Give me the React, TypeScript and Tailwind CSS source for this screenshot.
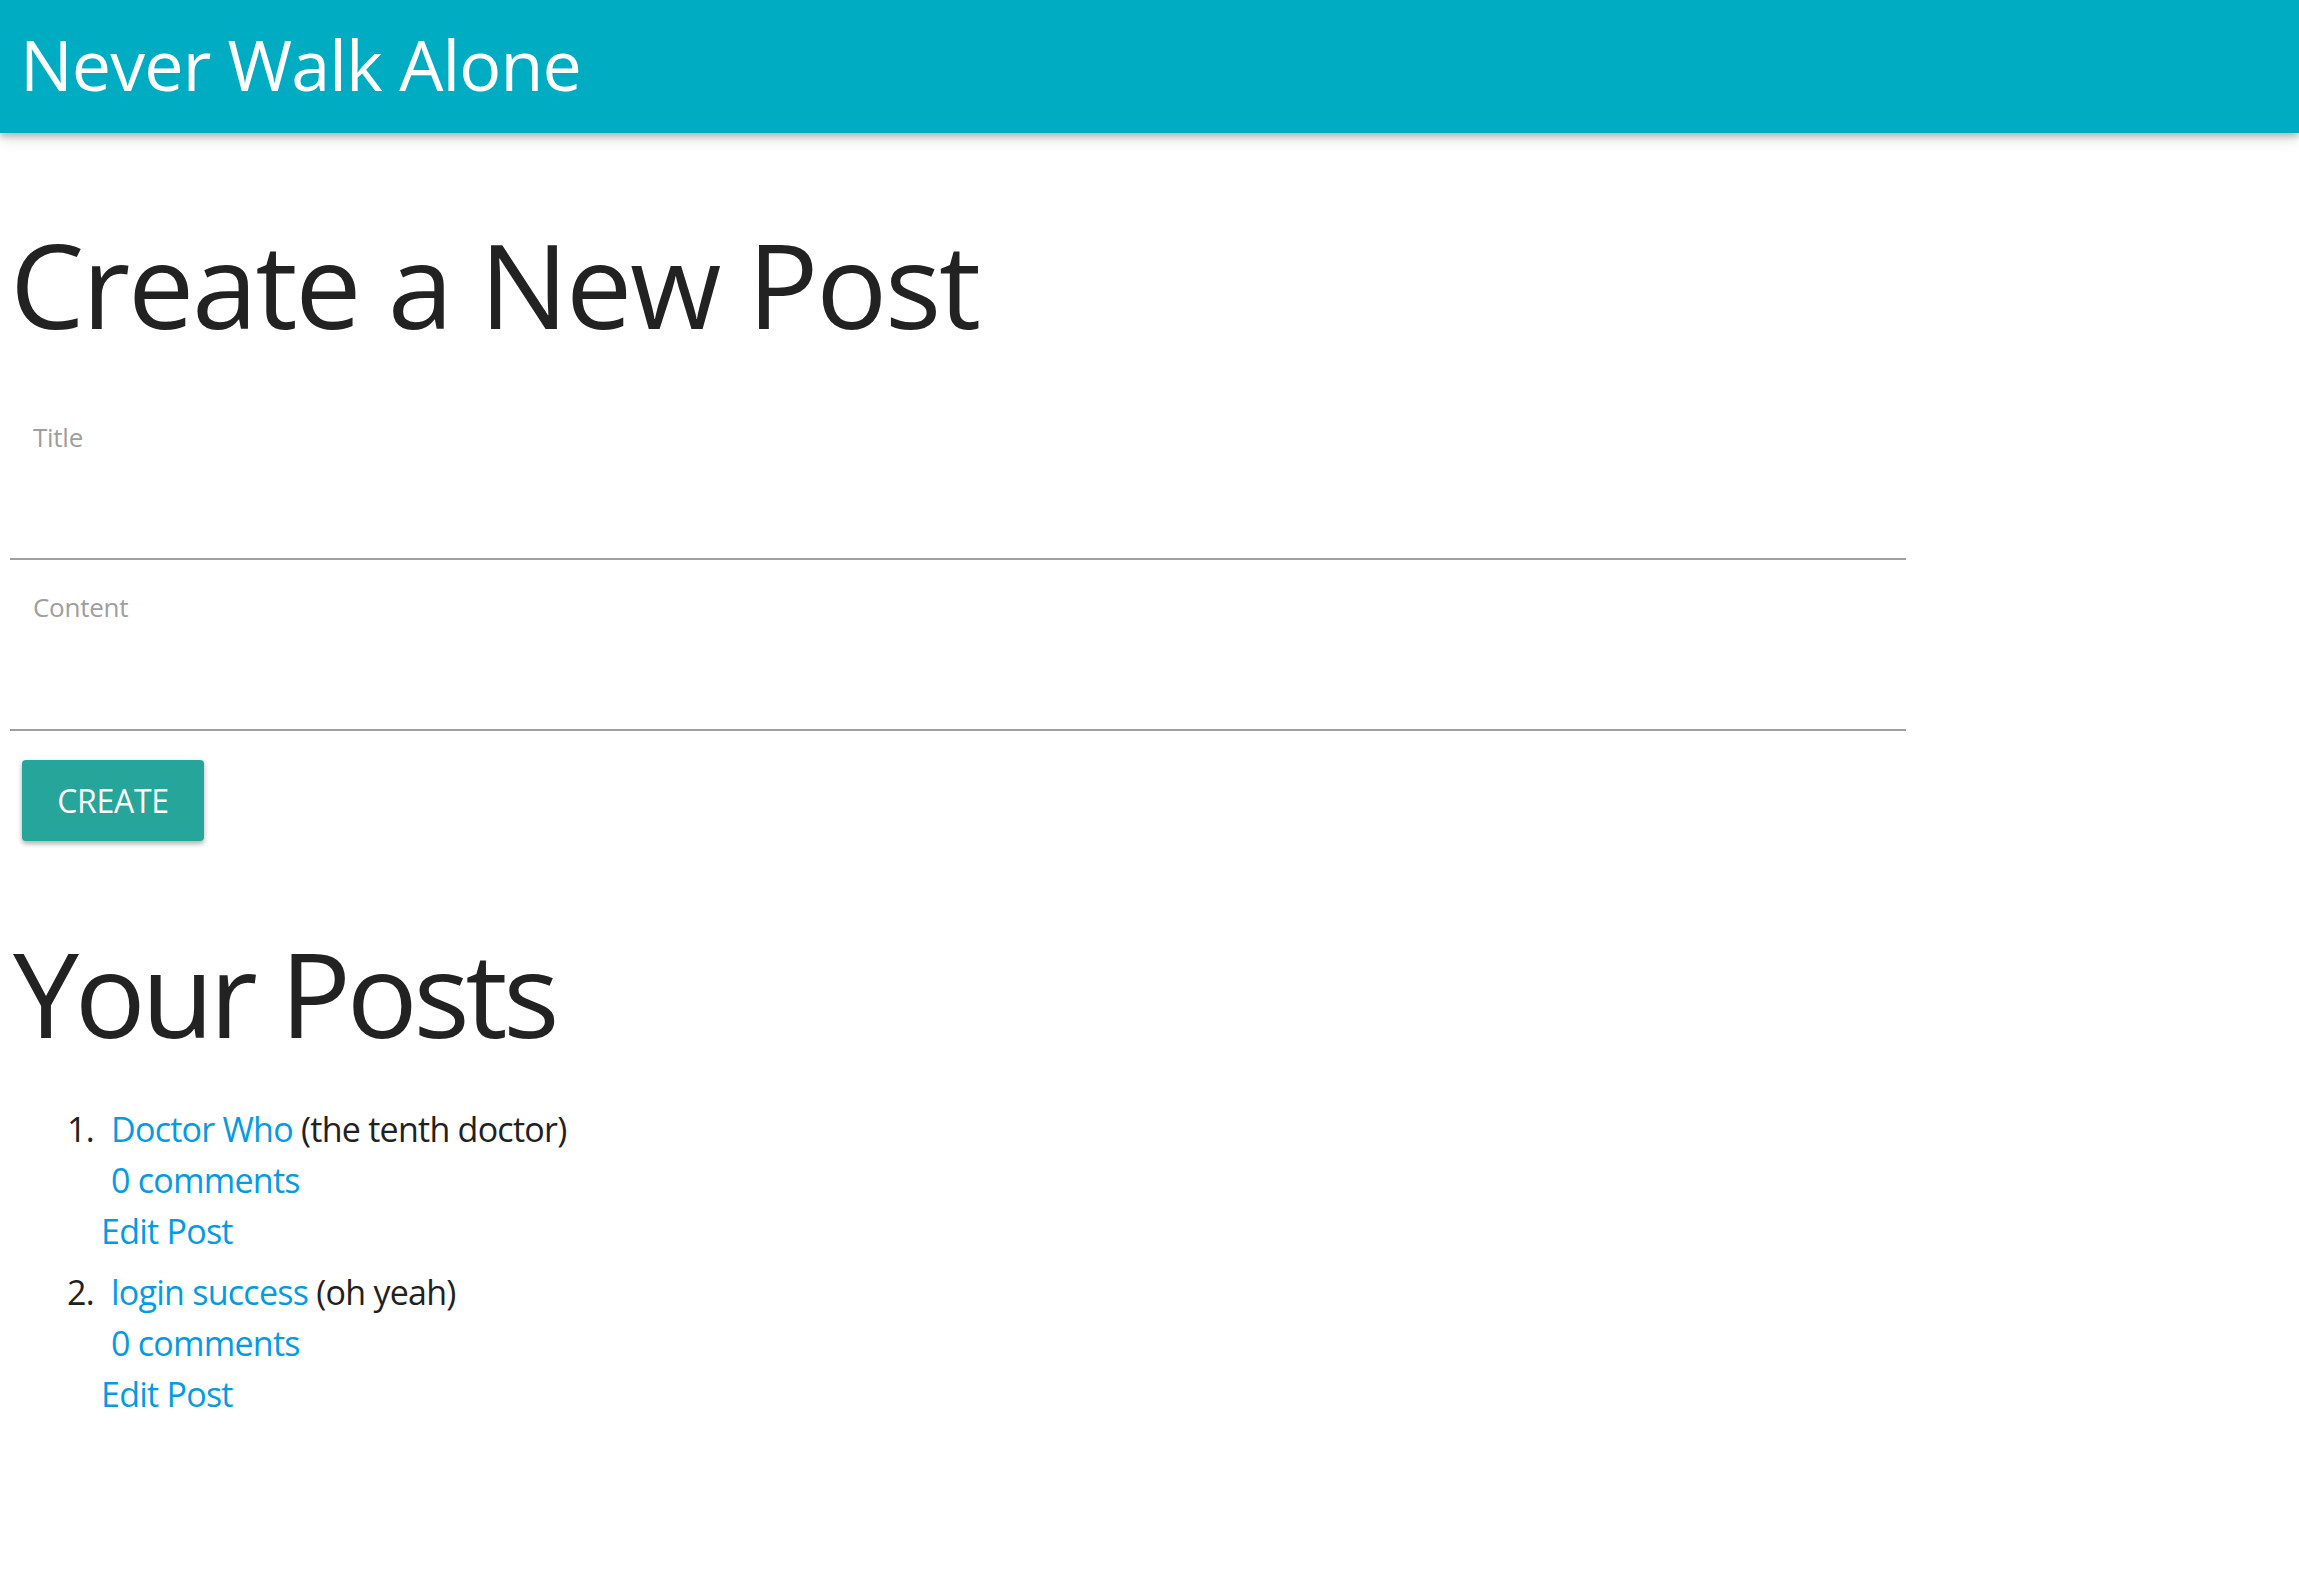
export default function App() {
  const posts = [
    { title: "Doctor Who", content: "the tenth doctor" },
    { title: "login success", content: "oh yeah" },
  ];
  return (
    <div className="min-h-screen bg-white text-[#212121] font-['Open_Sans',_'Noto_Sans',_sans-serif]">
      <header className="h-[133px] bg-[#00acc1] flex items-center pl-[20px] pb-[6px] shadow-[0_4px_6px_rgba(0,0,0,0.22),0_8px_14px_rgba(0,0,0,0.08)] relative z-10">
        <span className="text-white text-[70px] leading-none tracking-[-0.013em]">Never Walk Alone</span>
      </header>
      <main className="pl-[10px] w-[1906px]">
        <h1 className="mt-[92px] text-[118px] leading-none text-[#222] tracking-[-0.019em]">Create a New Post</h1>
        <div className="mt-[81px]">
          <label className="block ml-[23px] text-[26px] leading-none text-[#9e9e9e] tracking-[-0.01em]">Title</label>
          <div className="h-[110px] border-b-2 border-[#9e9e9e]" />
        </div>
        <div className="mt-[34px]">
          <label className="block ml-[23px] text-[26px] leading-none text-[#9e9e9e] tracking-[-0.01em]">Content</label>
          <div className="h-[111px] border-b-2 border-[#9e9e9e]" />
        </div>
        <button className="mt-[29px] ml-[12px] w-[182px] h-[81px] rounded-[4px] bg-[#26a69a] text-white text-[32px] leading-none uppercase tracking-[-0.01em] shadow-[0_3px_4px_rgba(0,0,0,0.2),0_2px_6px_rgba(0,0,0,0.14)]">
          Create
        </button>
        <h2 className="mt-[93px] ml-[3px] text-[118px] leading-none text-[#222] tracking-[-0.036em]">Your Posts</h2>
        <ol className="mt-[52px] text-[34px] leading-[51px] tracking-[-0.022em]">
          {posts.map((p, i) => (
            <li key={i} className={`flex ${i > 0 ? "mt-[10px]" : ""}`}>
              <span className="ml-[57px] w-[34px] shrink-0">{i + 1}.</span>
              <div className="flex flex-col">
                <div className="pl-[10px]">
                  <a className="text-[#039be5]">{p.title}</a> ({p.content})
                </div>
                <a className="pl-[10px] text-[#039be5]">0 comments</a>
                <a className="text-[#039be5]">Edit Post</a>
              </div>
            </li>
          ))}
        </ol>
      </main>
    </div>
  );
}
